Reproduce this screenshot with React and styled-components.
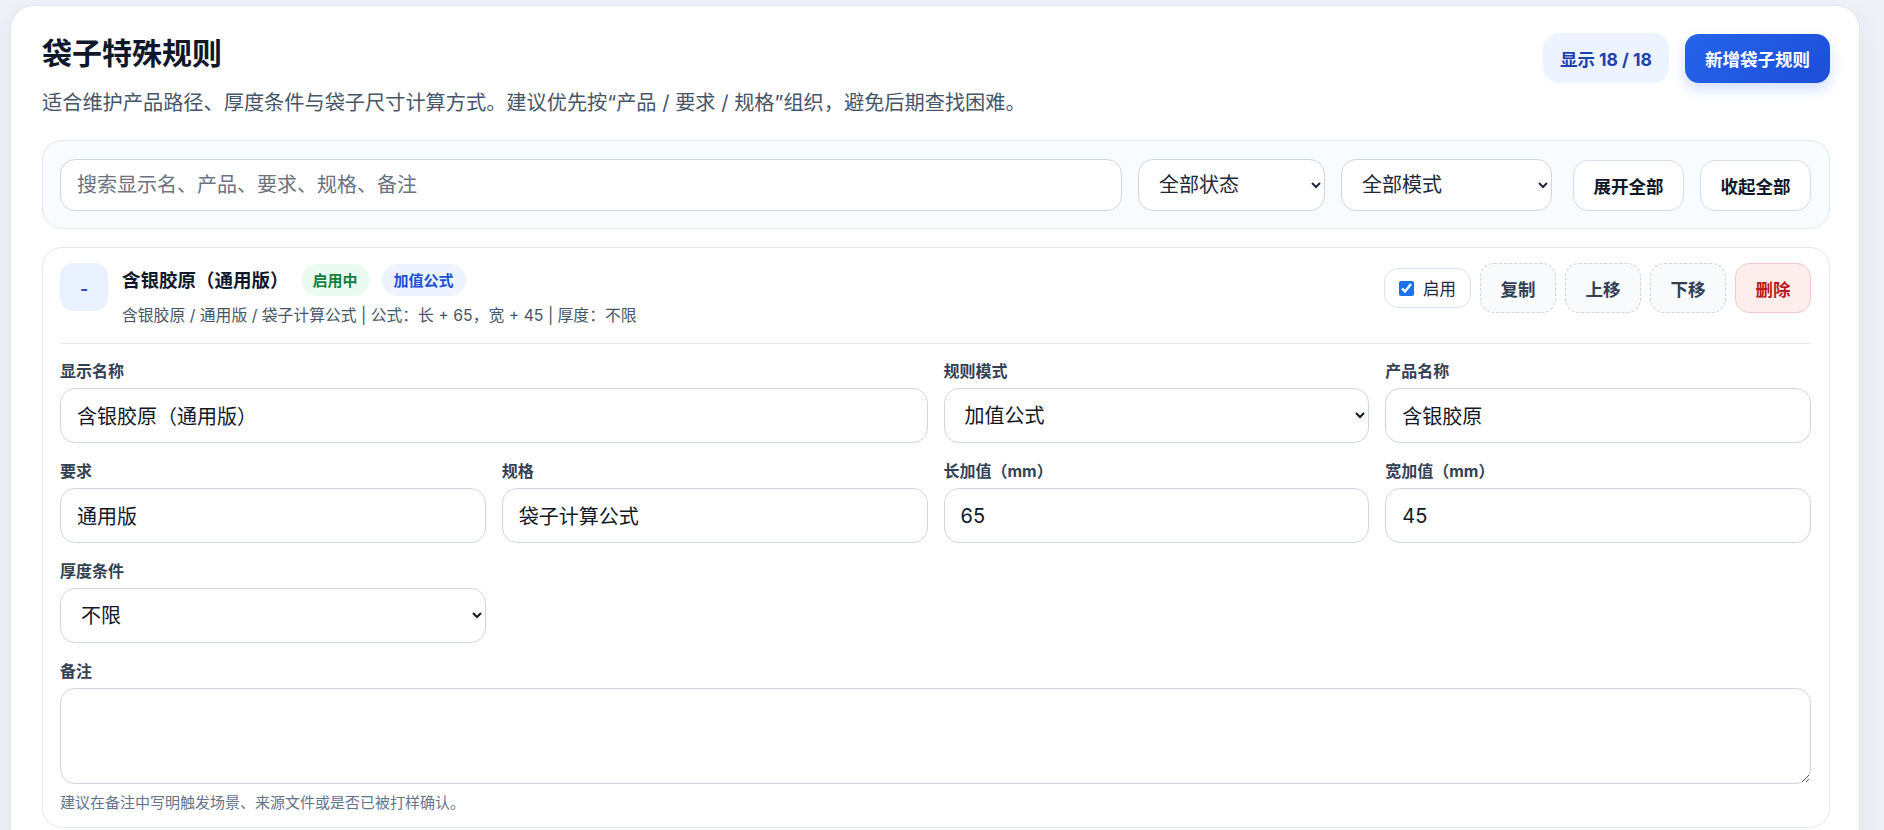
import React, { useState } from "react";
import styled, { createGlobalStyle } from "styled-components";

const FONT = `"Inter", "Noto Sans CJK SC", "Noto Sans", sans-serif`;

const GlobalStyle = createGlobalStyle`
  html, body {
    margin: 0;
    padding: 0;
    overflow: hidden;
    background: #eef1f7;
  }
  body {
    font-family: ${FONT};
    color: #0f172a;
  }
  * {
    box-sizing: border-box;
  }
  button, input, select, textarea {
    font-family: inherit;
  }
`;

const Page = styled.div`
  padding: 5px 24px 0 10px;
`;

const Panel = styled.main`
  background: #ffffff;
  border: 1px solid #e3e8ef;
  border-radius: 24px;
  padding: 27px 29px 40px 31px;
  box-shadow: 0 10px 30px rgba(15, 23, 42, 0.06);
`;

const PanelHeader = styled.header`
  display: flex;
  justify-content: space-between;
  align-items: flex-start;
  gap: 24px;
`;

const Title = styled.h1`
  margin: 0;
  font-size: 30px;
  line-height: 40px;
  font-weight: 700;
  color: #0f172a;
`;

const Subtitle = styled.p`
  margin: 16px 0 0;
  font-size: 20.2px;
  line-height: 28px;
  color: #475569;
`;

const HeaderActions = styled.div`
  display: flex;
  align-items: center;
  gap: 16px;
`;

const CountPill = styled.span`
  display: inline-flex;
  align-items: center;
  height: 50px;
  padding: 0 17px;
  border-radius: 16px;
  background: #edf4ff;
  color: #1e40af;
  font-size: 17.5px;
  font-weight: 700;
`;

const PrimaryButton = styled.button`
  height: 49px;
  padding: 0 20px;
  border: none;
  border-radius: 14px;
  background: linear-gradient(135deg, #2563eb 0%, #1d4ed8 100%);
  box-shadow: 0 6px 14px rgba(37, 99, 235, 0.22);
  color: #ffffff;
  font-size: 17.5px;
  font-weight: 700;
  cursor: pointer;
`;

const FilterBar = styled.section`
  margin-top: 23px;
  display: flex;
  align-items: center;
  gap: 16px;
  padding: 18px 18px 17px 17px;
  background: #f8fbff;
  border: 1px solid #e2e8f0;
  border-radius: 20px;
`;

const controlBase = `
  height: 52px;
  border: 1px solid #cfd6df;
  border-radius: 15px;
  background: #ffffff;
  font-size: 20px;
  color: #1f2937;
  outline: none;
`;

const SearchInput = styled.input`
  ${controlBase}
  flex: 1;
  min-width: 0;
  padding: 0 16px;
  &::placeholder {
    color: #6b7280;
  }
`;

const FilterSelect = styled.select`
  ${controlBase}
  width: ${(p) => p.$w}px;
  padding: 0 12px 0 16px;
`;

const ToolGroup = styled.div`
  display: flex;
  gap: 16px;
  margin-left: 5px;
`;

const ToolButton = styled.button`
  height: 51px;
  width: 111px;
  border: 1px solid #d6dde6;
  border-radius: 15px;
  background: #ffffff;
  color: #0f172a;
  font-size: 17.5px;
  font-weight: 700;
  cursor: pointer;
`;

const Card = styled.article`
  margin-top: 18px;
  background: #ffffff;
  border: 1px solid #e2e8f0;
  border-radius: 20px;
  padding: 15px 18px 14px 17px;
`;

const CardHead = styled.div`
  display: flex;
  justify-content: space-between;
  align-items: flex-start;
  padding-bottom: 16px;
  border-bottom: 1px solid #e5e9f0;
`;

const HeadLeft = styled.div`
  display: flex;
  align-items: flex-start;
  gap: 14px;
`;

const ToggleButton = styled.button`
  width: 48px;
  height: 48px;
  border: none;
  border-radius: 14px;
  background: #e9f1ff;
  color: #2b50c8;
  font-size: 17.5px;
  font-weight: 700;
  padding-top: 4px;
  cursor: pointer;
`;

const HeadText = styled.div`
  display: flex;
  flex-direction: column;
`;

const TitleRow = styled.div`
  display: flex;
  align-items: center;
  gap: 12px;
  height: 33px;
`;

const CardTitle = styled.h2`
  margin: 0;
  font-size: 18.5px;
  line-height: 26px;
  font-weight: 700;
  color: #0f172a;
`;

const tones = {
  green: { bg: "#ebfbf1", fg: "#157f3c" },
  blue: { bg: "#edf3ff", fg: "#1d4ed8" },
};

const Badge = styled.span`
  display: inline-flex;
  align-items: center;
  height: 32px;
  padding: 0 12px;
  border-radius: 999px;
  background: ${(p) => tones[p.$tone].bg};
  color: ${(p) => tones[p.$tone].fg};
  font-size: 15px;
  font-weight: 700;
`;

const Meta = styled.div`
  margin-top: 9px;
  font-size: 15.8px;
  line-height: 22px;
  color: #475569;
`;

const CardActions = styled.div`
  display: flex;
  align-items: center;
  gap: 9px;
`;

const EnableToggle = styled.label`
  display: inline-flex;
  align-items: center;
  gap: 9px;
  height: 40px;
  padding: 0 14px;
  border: 1px solid #dbe2ea;
  border-radius: 14px;
  background: #ffffff;
  font-size: 16.5px;
  color: #1f2937;
  & input {
    width: 15px;
    height: 15px;
    margin: 0;
    accent-color: #1a73e8;
  }
`;

const ActionButton = styled.button`
  width: 76px;
  height: 50px;
  border-radius: 14px;
  border: 1px ${(p) => (p.$danger ? "solid #f7caca" : "dashed #cbd5e1")};
  background: ${(p) => (p.$danger ? "#fdeeee" : "#f8fafc")};
  color: ${(p) => (p.$danger ? "#b91c1c" : "#334155")};
  font-size: 17.5px;
  font-weight: 700;
  cursor: pointer;
`;

const FormGrid = styled.div`
  margin-top: 16px;
  display: grid;
  grid-template-columns: repeat(4, 1fr);
  column-gap: 16px;
  row-gap: 17px;
`;

const Field = styled.label`
  display: flex;
  flex-direction: column;
  gap: 6px;
  min-width: 0;
  grid-column: span ${(p) => p.$span || 1};
`;

const FieldLabel = styled.span`
  font-size: 16px;
  line-height: 22px;
  font-weight: 700;
  color: #334155;
`;

const fieldBase = `
  width: 100%;
  border: 1px solid #cfd6df;
  border-radius: 15px;
  background: #ffffff;
  font-size: 20px;
  color: #111827;
  outline: none;
`;

const TextInput = styled.input`
  ${fieldBase}
  height: 55px;
  padding: 0 16px;
`;

const Select = styled.select`
  ${fieldBase}
  height: 55px;
  padding: 0 12px 0 16px;
`;

const TextArea = styled.textarea`
  ${fieldBase}
  height: 96px;
  padding: 12px 16px;
  resize: vertical;
`;

const Hint = styled.span`
  margin-top: 3px;
  font-size: 15px;
  line-height: 20px;
  color: #64748b;
`;

const rule = {
  name: "含银胶原（通用版）",
  product: "含银胶原",
  requirement: "通用版",
  spec: "袋子计算公式",
  mode: "加值公式",
  lengthAdd: 65,
  widthAdd: 45,
  thickness: "不限",
};

const App = () => {
  const [open, setOpen] = useState(true);
  const [enabled, setEnabled] = useState(true);

  return (
    <Page>
      <GlobalStyle />
      <Panel>
        <PanelHeader>
          <div>
            <Title>袋子特殊规则</Title>
            <Subtitle>
              适合维护产品路径、厚度条件与袋子尺寸计算方式。建议优先按“产品 / 要求 / 规格”组织，避免后期查找困难。
            </Subtitle>
          </div>
          <HeaderActions>
            <CountPill>显示 18 / 18</CountPill>
            <PrimaryButton>新增袋子规则</PrimaryButton>
          </HeaderActions>
        </PanelHeader>

        <FilterBar>
          <SearchInput placeholder="搜索显示名、产品、要求、规格、备注" />
          <FilterSelect $w={187} defaultValue="all">
            <option value="all">全部状态</option>
            <option value="on">启用中</option>
            <option value="off">已停用</option>
          </FilterSelect>
          <FilterSelect $w={211} defaultValue="all">
            <option value="all">全部模式</option>
            <option value="add">加值公式</option>
            <option value="fixed">固定尺寸</option>
          </FilterSelect>
          <ToolGroup>
            <ToolButton onClick={() => setOpen(true)}>展开全部</ToolButton>
            <ToolButton onClick={() => setOpen(false)}>收起全部</ToolButton>
          </ToolGroup>
        </FilterBar>

        <Card>
          <CardHead>
            <HeadLeft>
              <ToggleButton onClick={() => setOpen(!open)}>
                {open ? "-" : "+"}
              </ToggleButton>
              <HeadText>
                <TitleRow>
                  <CardTitle>{rule.name}</CardTitle>
                  <Badge $tone="green">{enabled ? "启用中" : "已停用"}</Badge>
                  <Badge $tone="blue">{rule.mode}</Badge>
                </TitleRow>
                <Meta>
                  {rule.product} / {rule.requirement} / {rule.spec} | 公式：长 +{" "}
                  {rule.lengthAdd}，宽 + {rule.widthAdd} | 厚度：{rule.thickness}
                </Meta>
              </HeadText>
            </HeadLeft>
            <CardActions>
              <EnableToggle>
                <input
                  type="checkbox"
                  checked={enabled}
                  onChange={() => setEnabled(!enabled)}
                />
                启用
              </EnableToggle>
              <ActionButton>复制</ActionButton>
              <ActionButton>上移</ActionButton>
              <ActionButton>下移</ActionButton>
              <ActionButton $danger>删除</ActionButton>
            </CardActions>
          </CardHead>

          {open && (
            <FormGrid>
              <Field $span={2}>
                <FieldLabel>显示名称</FieldLabel>
                <TextInput defaultValue={rule.name} />
              </Field>
              <Field>
                <FieldLabel>规则模式</FieldLabel>
                <Select defaultValue="add">
                  <option value="add">加值公式</option>
                  <option value="fixed">固定尺寸</option>
                </Select>
              </Field>
              <Field>
                <FieldLabel>产品名称</FieldLabel>
                <TextInput defaultValue={rule.product} />
              </Field>
              <Field>
                <FieldLabel>要求</FieldLabel>
                <TextInput defaultValue={rule.requirement} />
              </Field>
              <Field>
                <FieldLabel>规格</FieldLabel>
                <TextInput defaultValue={rule.spec} />
              </Field>
              <Field>
                <FieldLabel>长加值（mm）</FieldLabel>
                <TextInput defaultValue={rule.lengthAdd} />
              </Field>
              <Field>
                <FieldLabel>宽加值（mm）</FieldLabel>
                <TextInput defaultValue={rule.widthAdd} />
              </Field>
              <Field>
                <FieldLabel>厚度条件</FieldLabel>
                <Select defaultValue="any">
                  <option value="any">不限</option>
                  <option value="thin">薄款</option>
                  <option value="thick">厚款</option>
                </Select>
              </Field>
              <Field $span={4}>
                <FieldLabel>备注</FieldLabel>
                <TextArea />
                <Hint>建议在备注中写明触发场景、来源文件或是否已被打样确认。</Hint>
              </Field>
            </FormGrid>
          )}
        </Card>
      </Panel>
    </Page>
  );
};

export default App;
